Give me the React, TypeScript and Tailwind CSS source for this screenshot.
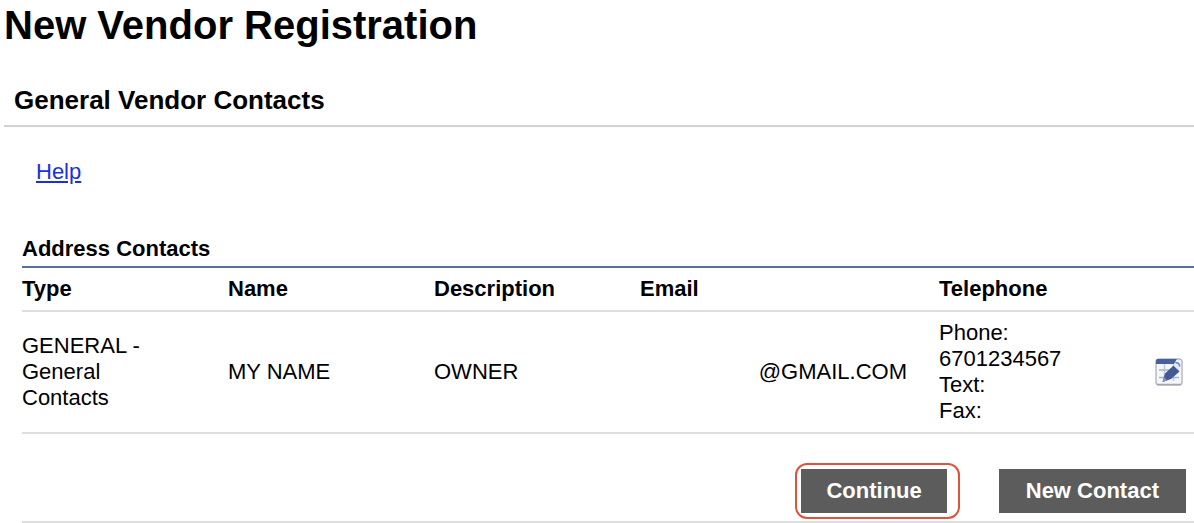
import React from 'react';

interface Contact {
  type: string;
  name: string;
  description: string;
  email: string;
  phone: string;
  text: string;
  fax: string;
}

const contacts: Contact[] = [
  {
    type: 'GENERAL - General Contacts',
    name: 'MY NAME',
    description: 'OWNER',
    email: '@GMAIL.COM',
    phone: '6701234567',
    text: '',
    fax: '',
  },
];

const EditIcon: React.FC = () => (
  <svg width="28" height="28" viewBox="0 0 28 28" aria-hidden="true">
    <rect x="1" y="1" width="26" height="26" rx="3" fill="#f5f6fa" stroke="#b9bbc2" strokeWidth="1.5" />
    <path d="M2 26.500h24" stroke="#a3a6ae" strokeWidth="1.5" />
    <path d="M1 6V3a2 2 0 0 1 2-2h19l-3 5z" fill="#4560a0" />
    <path d="M9.500 6v17M18.500 6v17" stroke="#c3cadb" strokeWidth="1.500" />
    <path d="M4 12h20M4 19.500h20" stroke="#a9b4cd" strokeWidth="1.500" />
    <path d="M7.500 24l2.500-8.500L18.500 7.500l6 6L16 21z" fill="#415b99" />
    <path d="M7.500 24l1.500-5 3.500 3.500z" fill="#8994b2" />
    <path d="M18.500 7l2-3c2-1.500 6 1 5 4.500l-1.500 4z" fill="#e6eaf5" />
    <path d="M20.500 5c2-1 4.500 1 4 3.500" fill="none" stroke="#6c82b6" strokeWidth="1.5" />
  </svg>
);

const ContactRow: React.FC<{ contact: Contact }> = ({ contact }) => (
  <tr className="border-b-2 border-[#dedede]">
    <td className="py-2 pr-12">{contact.type}</td>
    <td className="py-2">{contact.name}</td>
    <td className="py-2">{contact.description}</td>
    <td className="py-2 pr-8 text-right">{contact.email}</td>
    <td className="py-2">
      <div>Phone:</div>
      <div>{contact.phone}</div>
      <div>Text: {contact.text}</div>
      <div>Fax: {contact.fax}</div>
    </td>
    <td className="py-2 pr-[11px]">
      <button type="button" aria-label="Edit contact" className="ml-auto block cursor-pointer">
        <EditIcon />
      </button>
    </td>
  </tr>
);

export default function App() {
  return (
    <main className="bg-white font-['Liberation_Sans',Arial,sans-serif] text-[22px] leading-[26px] text-black">
      <header className="pl-1">
        <h1 className="text-[40px] leading-[50px] font-bold">New Vendor Registration</h1>
        <h2 className="mt-[33px] border-b-2 border-[#d2d2d2] pb-2 pl-2.5 text-[26px] leading-[34px] font-bold">
          General Vendor Contacts
        </h2>
      </header>

      <section className="pl-[22px]">
        <div className="px-3.5 pt-8">
          <a href="#help" className="text-[#1a2fe0] underline">
            Help
          </a>
        </div>

        <table className="mt-[51px] w-full table-fixed border-collapse text-left">
          <caption className="pb-1 text-left font-bold">Address Contacts</caption>
          <colgroup>
            <col className="w-[206px]" />
            <col className="w-[206px]" />
            <col className="w-[206px]" />
            <col className="w-[299px]" />
            <col />
            <col className="w-[60px]" />
          </colgroup>
          <thead>
            <tr className="border-t-2 border-b-2 border-t-[#5b6f9c] border-b-[#dedede]">
              <th className="py-2">Type</th>
              <th className="py-2">Name</th>
              <th className="py-2">Description</th>
              <th className="py-2">Email</th>
              <th className="py-2">Telephone</th>
              <td />
            </tr>
          </thead>
          <tbody>
            {contacts.map((contact) => (
              <ContactRow key={contact.name} contact={contact} />
            ))}
          </tbody>
        </table>

        {/* Actions */}
        <div className="flex items-center justify-end gap-[39px] border-b-2 border-[#dedede] pt-[29px] pr-2 pb-0.5">
          <div className="rounded-xl border-2 border-[#e2513a] py-1 pr-[11px] pl-1">
            <button type="button" className="h-11 cursor-pointer bg-[#5c5c5c] px-[25px] font-bold text-white">
              Continue
            </button>
          </div>
          <button type="button" className="h-11 cursor-pointer bg-[#5c5c5c] px-[27px] font-bold text-white">
            New Contact
          </button>
        </div>
      </section>
    </main>
  );
}
